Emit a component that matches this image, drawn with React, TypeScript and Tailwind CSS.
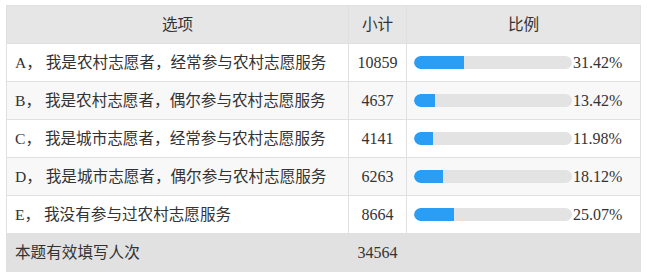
const rows = [
  { label: "A， 我是农村志愿者，经常参与农村志愿服务", count: 10859, pct: 31.42 },
  { label: "B， 我是农村志愿者，偶尔参与农村志愿服务", count: 4637, pct: 13.42 },
  { label: "C， 我是城市志愿者，经常参与农村志愿服务", count: 4141, pct: 11.98 },
  { label: "D， 我是城市志愿者，偶尔参与农村志愿服务", count: 6263, pct: 18.12 },
  { label: "E， 我没有参与过农村志愿服务", count: 8664, pct: 25.07 },
];

export default function App() {
  return (
    <div className="h-[279px] w-[647px] bg-white pl-[6px] pt-[5px] font-['Liberation_Serif','Noto_Sans_CJK_SC',serif] text-[15.6px] text-[#333]">
      <table className="w-[634px] table-fixed border-collapse">
        <colgroup>
          <col className="w-[342px]" />
          <col className="w-[58px]" />
          <col className="w-[234px]" />
        </colgroup>
        <thead>
          <tr className="h-[38px] bg-[#e6e6e6]">
            <th className="border border-[#e0e0e0] font-normal">选项</th>
            <th className="border border-[#e0e0e0] font-normal">小计</th>
            <th className="border border-[#e0e0e0] font-normal">比例</th>
          </tr>
        </thead>
        <tbody>
          {rows.map((row, i) => (
            <tr key={row.count} className={i % 2 === 1 ? "h-[38px] bg-[#f8f8f8]" : "h-[38px] bg-white"}>
              <td className="whitespace-nowrap border border-[#e0e0e0] pl-[8px]">{row.label}</td>
              <td className="border border-[#e0e0e0] text-center text-[16px]">{row.count}</td>
              <td className="border border-[#e0e0e0] pl-[7px]">
                <div className="flex items-center">
                  <div className="h-[13px] w-[158px] overflow-hidden rounded-full bg-[#e3e3e3]">
                    <div className="h-full rounded-l-full bg-[#2a9ef5]" style={{ width: `${row.pct}%` }} />
                  </div>
                  <span className="ml-[1px] text-[16px]">{row.pct.toFixed(2)}%</span>
                </div>
              </td>
            </tr>
          ))}
          <tr className="h-[38px] bg-[#e1e1e1]">
            <td className="border border-[#e0e0e0] pl-[8px]">本题有效填写人次</td>
            <td className="border border-[#e0e0e0] text-center text-[16px]">34564</td>
            <td className="border border-[#e0e0e0]"></td>
          </tr>
        </tbody>
      </table>
    </div>
  );
}
